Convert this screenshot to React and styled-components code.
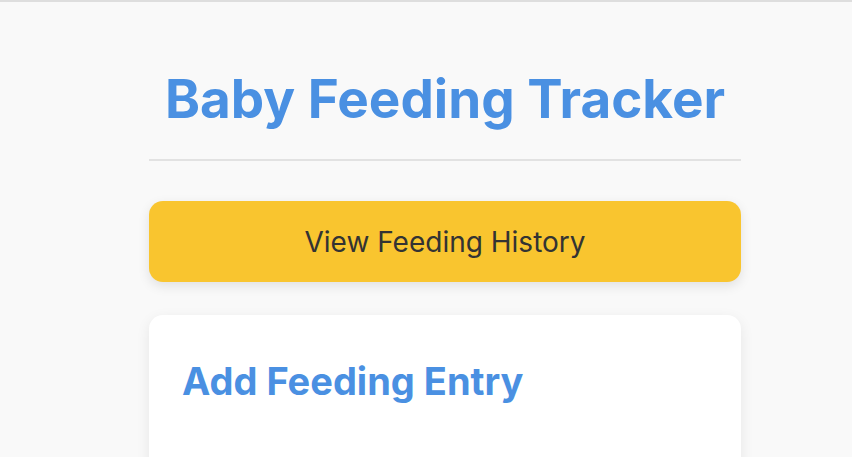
import React from 'react'
import styled, { createGlobalStyle } from 'styled-components'

const GlobalStyle = createGlobalStyle`
  html, body {
    margin: 0;
    padding: 0;
    background: #f9f9f9;
    font-family: Inter, "Noto Sans", sans-serif;
  }
  body {
    border-top: 2px solid #dedede;
  }
`

export default function App() {
  return (
    <>
      <GlobalStyle />
      <Page>
        <Title>Baby Feeding Tracker</Title>
        <Divider />
        <HistoryButton>View Feeding History</HistoryButton>
        <Card>
          <CardTitle>Add Feeding Entry</CardTitle>
        </Card>
      </Page>
    </>
  )
}

const Page = styled.main`
  width: 592px;
  margin-left: 149px;
  padding-top: 64px;
  display: flex;
  flex-direction: column;
`

const Title = styled.h1`
  margin: 0;
  text-align: center;
  color: #4a90e2;
  font-size: 53px;
  font-weight: 700;
  line-height: 66px;
`

const Divider = styled.hr`
  width: 100%;
  margin: 27px 0 0;
  border: none;
  height: 2px;
  background: #e2e2e2;
`

const HistoryButton = styled.button`
  margin-top: 40px;
  height: 81px;
  border: none;
  border-radius: 14px;
  background: #f9c52f;
  color: #333333;
  font-family: Inter, "Noto Sans", sans-serif;
  font-size: 28px;
  box-shadow: 0 4px 12px rgba(0, 0, 0, 0.1);
  cursor: pointer;
`

const Card = styled.section`
  margin-top: 33px;
  height: 200px;
  background: #ffffff;
  border-radius: 14px;
  padding: 42px 33px;
  box-shadow: 0 4px 14px rgba(0, 0, 0, 0.08);
`

const CardTitle = styled.h2`
  margin: 0;
  color: #4a90e2;
  font-size: 38px;
  font-weight: 700;
  line-height: 48px;
`
